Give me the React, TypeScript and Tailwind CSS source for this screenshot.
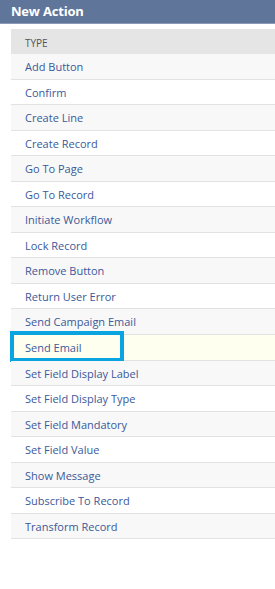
const actions = [
  "Add Button",
  "Confirm",
  "Create Line",
  "Create Record",
  "Go To Page",
  "Go To Record",
  "Initiate Workflow",
  "Lock Record",
  "Remove Button",
  "Return User Error",
  "Send Campaign Email",
  "Send Email",
  "Set Field Display Label",
  "Set Field Display Type",
  "Set Field Mandatory",
  "Set Field Value",
  "Show Message",
  "Subscribe To Record",
  "Transform Record",
];

export default function App() {
  return (
    <div className="w-[275px] h-[589px] bg-white overflow-hidden" style={{ fontFamily: '"Open Sans", sans-serif' }}>
      <div className="h-[24px] bg-[#5f7599] border-b border-[#8b9bb6] flex items-center pl-[11px]">
        <span className="text-white font-bold text-[13px] tracking-[-0.2px]">New Action</span>
      </div>
      <div className="mt-[5px] ml-[11px]">
        <div className="h-[25px] bg-[#e5e5e5] flex items-center pl-[14px] pt-[3px] text-[10px] text-[#555]">TYPE</div>
        {actions.map((a, i) => {
          const selected = a === "Send Email";
          const bg = selected ? "bg-[#fffff0]" : i % 2 === 0 ? "bg-[#f8f8f8]" : "bg-white";
          return (
            <div key={a} className={`relative h-[25.55px] flex items-center pl-[14px] pt-[2px] border-b border-[#e2e2e2] text-[11px] text-[#3b5999] ${bg}`}>
              {selected && (
                <div className="absolute left-[-1px] top-[-4px] w-[114px] h-[31px] border-[4px] border-[#0aa5e0]" />
              )}
              <span className="relative">{a}</span>
            </div>
          );
        })}
      </div>
    </div>
  );
}
